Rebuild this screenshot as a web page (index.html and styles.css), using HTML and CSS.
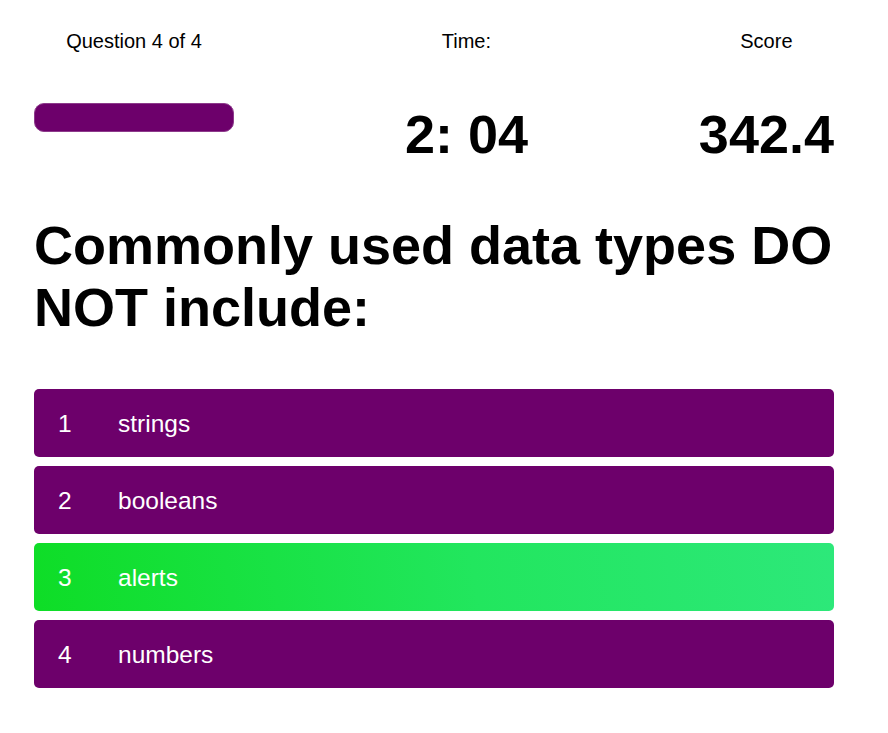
FILE: index.html
```html
<!DOCTYPE html>
<html lang="en">
<head>
<meta charset="utf-8">
<title>Quiz</title>
<link rel="stylesheet" href="styles.css">
</head>
<body>
<main class="quiz">
  <header class="stats">
    <div class="stat">
      <p class="stat-label">Question 4 of 4</p>
      <div class="progress"></div>
    </div>
    <div class="stat">
      <p class="stat-label">Time:</p>
      <p class="stat-value">2: 04</p>
    </div>
    <div class="stat">
      <p class="stat-label">Score</p>
      <p class="stat-value">342.4</p>
    </div>
  </header>
  <h1 class="question">Commonly used data types DO NOT include:</h1>
  <ul class="answers">
    <li class="answer"><span class="answer-num">1</span><span class="answer-text">strings</span></li>
    <li class="answer"><span class="answer-num">2</span><span class="answer-text">booleans</span></li>
    <li class="answer correct"><span class="answer-num">3</span><span class="answer-text">alerts</span></li>
    <li class="answer"><span class="answer-num">4</span><span class="answer-text">numbers</span></li>
  </ul>
</main>
</body>
</html>
```
FILE: styles.css
```css
* { box-sizing: border-box; }
html, body { margin: 0; padding: 0; background: #fff; }
body {
  font-family: "Liberation Sans", Arial, Helvetica, sans-serif;
  color: #000;
}
.quiz {
  width: 888px;
  padding: 30px 54px 40px 34px;
}
.stats {
  display: flex;
  justify-content: space-between;
  align-items: flex-start;
}
.stat {
  display: flex;
  flex-direction: column;
  align-items: center;
}
.stat-label {
  margin: 0 0 50px;
  font-size: 20px;
  line-height: 23px;
}
.stat-value {
  margin: 0;
  font-size: 54px;
  line-height: 62px;
  font-weight: bold;
}
.progress {
  width: 200px;
  height: 29px;
  border-radius: 10px;
  background: #6d006b;
  border: 1px solid #8d3a8b;
}
.question {
  margin: 49px 0 51px;
  font-size: 54px;
  line-height: 62px;
  font-weight: bold;
}
.answers {
  list-style: none;
  margin: 0;
  padding: 0;
  display: flex;
  flex-direction: column;
  gap: 9px;
}
.answer {
  display: flex;
  align-items: center;
  height: 68px;
  padding: 2px 0 0 24px;
  border-radius: 5px;
  background: #6d006b;
  color: #fff;
  font-size: 24.5px;
}
.answer.correct {
  background: linear-gradient(80deg, #0edd26 0%, #22e65e 55%, #2de87a 100%);
}
.answer-num {
  width: 60px;
}
```
